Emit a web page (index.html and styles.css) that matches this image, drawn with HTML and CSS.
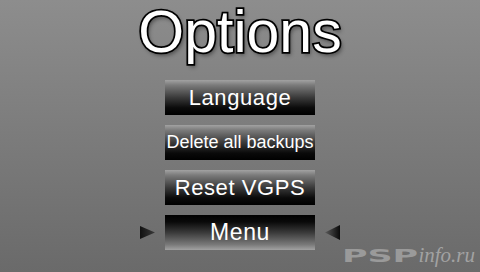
FILE: index.html
```html
<!DOCTYPE html>
<html>
<head>
<meta charset="utf-8">
<link rel="stylesheet" href="styles.css">
</head>
<body>
<div class="screen">
  <h1 class="title">Options</h1>
  <div class="menu">
    <div class="row"><div class="btn">Language</div></div>
    <div class="row"><div class="btn small">Delete all backups</div></div>
    <div class="row"><div class="btn">Reset VGPS</div></div>
    <div class="row">
      <svg class="arrow" width="15" height="15" viewBox="0 0 15 15">
        <defs>
          <linearGradient id="ga" x1="0" y1="0" x2="1" y2="0">
            <stop offset="0" stop-color="#111"/>
            <stop offset="1" stop-color="#3a3a3a"/>
          </linearGradient>
        </defs>
        <polygon points="0,1 15,7.5 0,14" fill="url(#ga)"/>
      </svg>
      <div class="btn selected">Menu</div>
      <svg class="arrow" width="15" height="15" viewBox="0 0 15 15">
        <defs>
          <linearGradient id="gb" x1="0" y1="0" x2="1" y2="0">
            <stop offset="0" stop-color="#5a5a5a"/>
            <stop offset="1" stop-color="#0a0a0a"/>
          </linearGradient>
        </defs>
        <polygon points="15,0 0,7.5 15,15" fill="url(#gb)"/>
      </svg>
    </div>
  </div>
  <div class="logo"><span class="psp">PSP</span><span class="info">info.ru</span></div>
</div>
</body>
</html>
```
FILE: styles.css
```css
html, body {
  margin: 0;
  padding: 0;
}
body {
  width: 480px;
  height: 272px;
  overflow: hidden;
  font-family: "Liberation Sans", Arial, sans-serif;
}
.screen {
  position: relative;
  width: 480px;
  height: 272px;
  background: linear-gradient(#8d8d8d, #6a6a6a);
  display: flex;
  flex-direction: column;
  align-items: center;
}
.title {
  margin: 0;
  padding-top: 3px;
  height: 58px;
  font-size: 59px;
  line-height: 58px;
  font-weight: normal;
  color: #fff;
  -webkit-text-stroke: 3.5px #000;
  paint-order: stroke fill;
  text-shadow: 2px 3px 4px rgba(0,0,0,0.45), 0 0 3px rgba(0,0,0,0.4);
  margin-bottom: 19px;
}
.menu {
  display: flex;
  flex-direction: column;
  gap: 10px;
}
.row {
  display: flex;
  align-items: center;
  justify-content: center;
  gap: 10px;
  width: 200px;
}
.btn {
  width: 150px;
  height: 35px;
  display: flex;
  align-items: center;
  justify-content: center;
  color: #fff;
  font-size: 22px;
  letter-spacing: 0.6px;
  background: linear-gradient(#a2a2a2 0%, #7a7a7a 15%, #3a3a3a 50%, #0a0a0a 80%, #000 100%);
}
.btn.small {
  font-size: 18px;
  letter-spacing: 0;
}
.btn.selected {
  font-size: 23px;
  background: linear-gradient(#000 0%, #0a0a0a 20%, #3a3a3a 50%, #7a7a7a 85%, #a2a2a2 100%);
}
.arrow {
  display: block;
  flex: none;
}
.logo {
  position: absolute;
  right: 5px;
  bottom: 9px;
  display: flex;
  align-items: baseline;
  color: #a0a0a0;
}
.psp {
  display: inline-block;
  font-family: "DejaVu Sans", sans-serif;
  font-weight: bold;
  font-size: 17px;
  line-height: 14px;
  transform: scaleX(2.05);
  transform-origin: right center;
  letter-spacing: 0;
  color: #9a9a9a;
}
.info {
  font-family: "Liberation Serif", serif;
  font-style: italic;
  font-size: 21px;
  line-height: 14px;
  color: #a2a2a2;
  margin-left: 0;
}
```
